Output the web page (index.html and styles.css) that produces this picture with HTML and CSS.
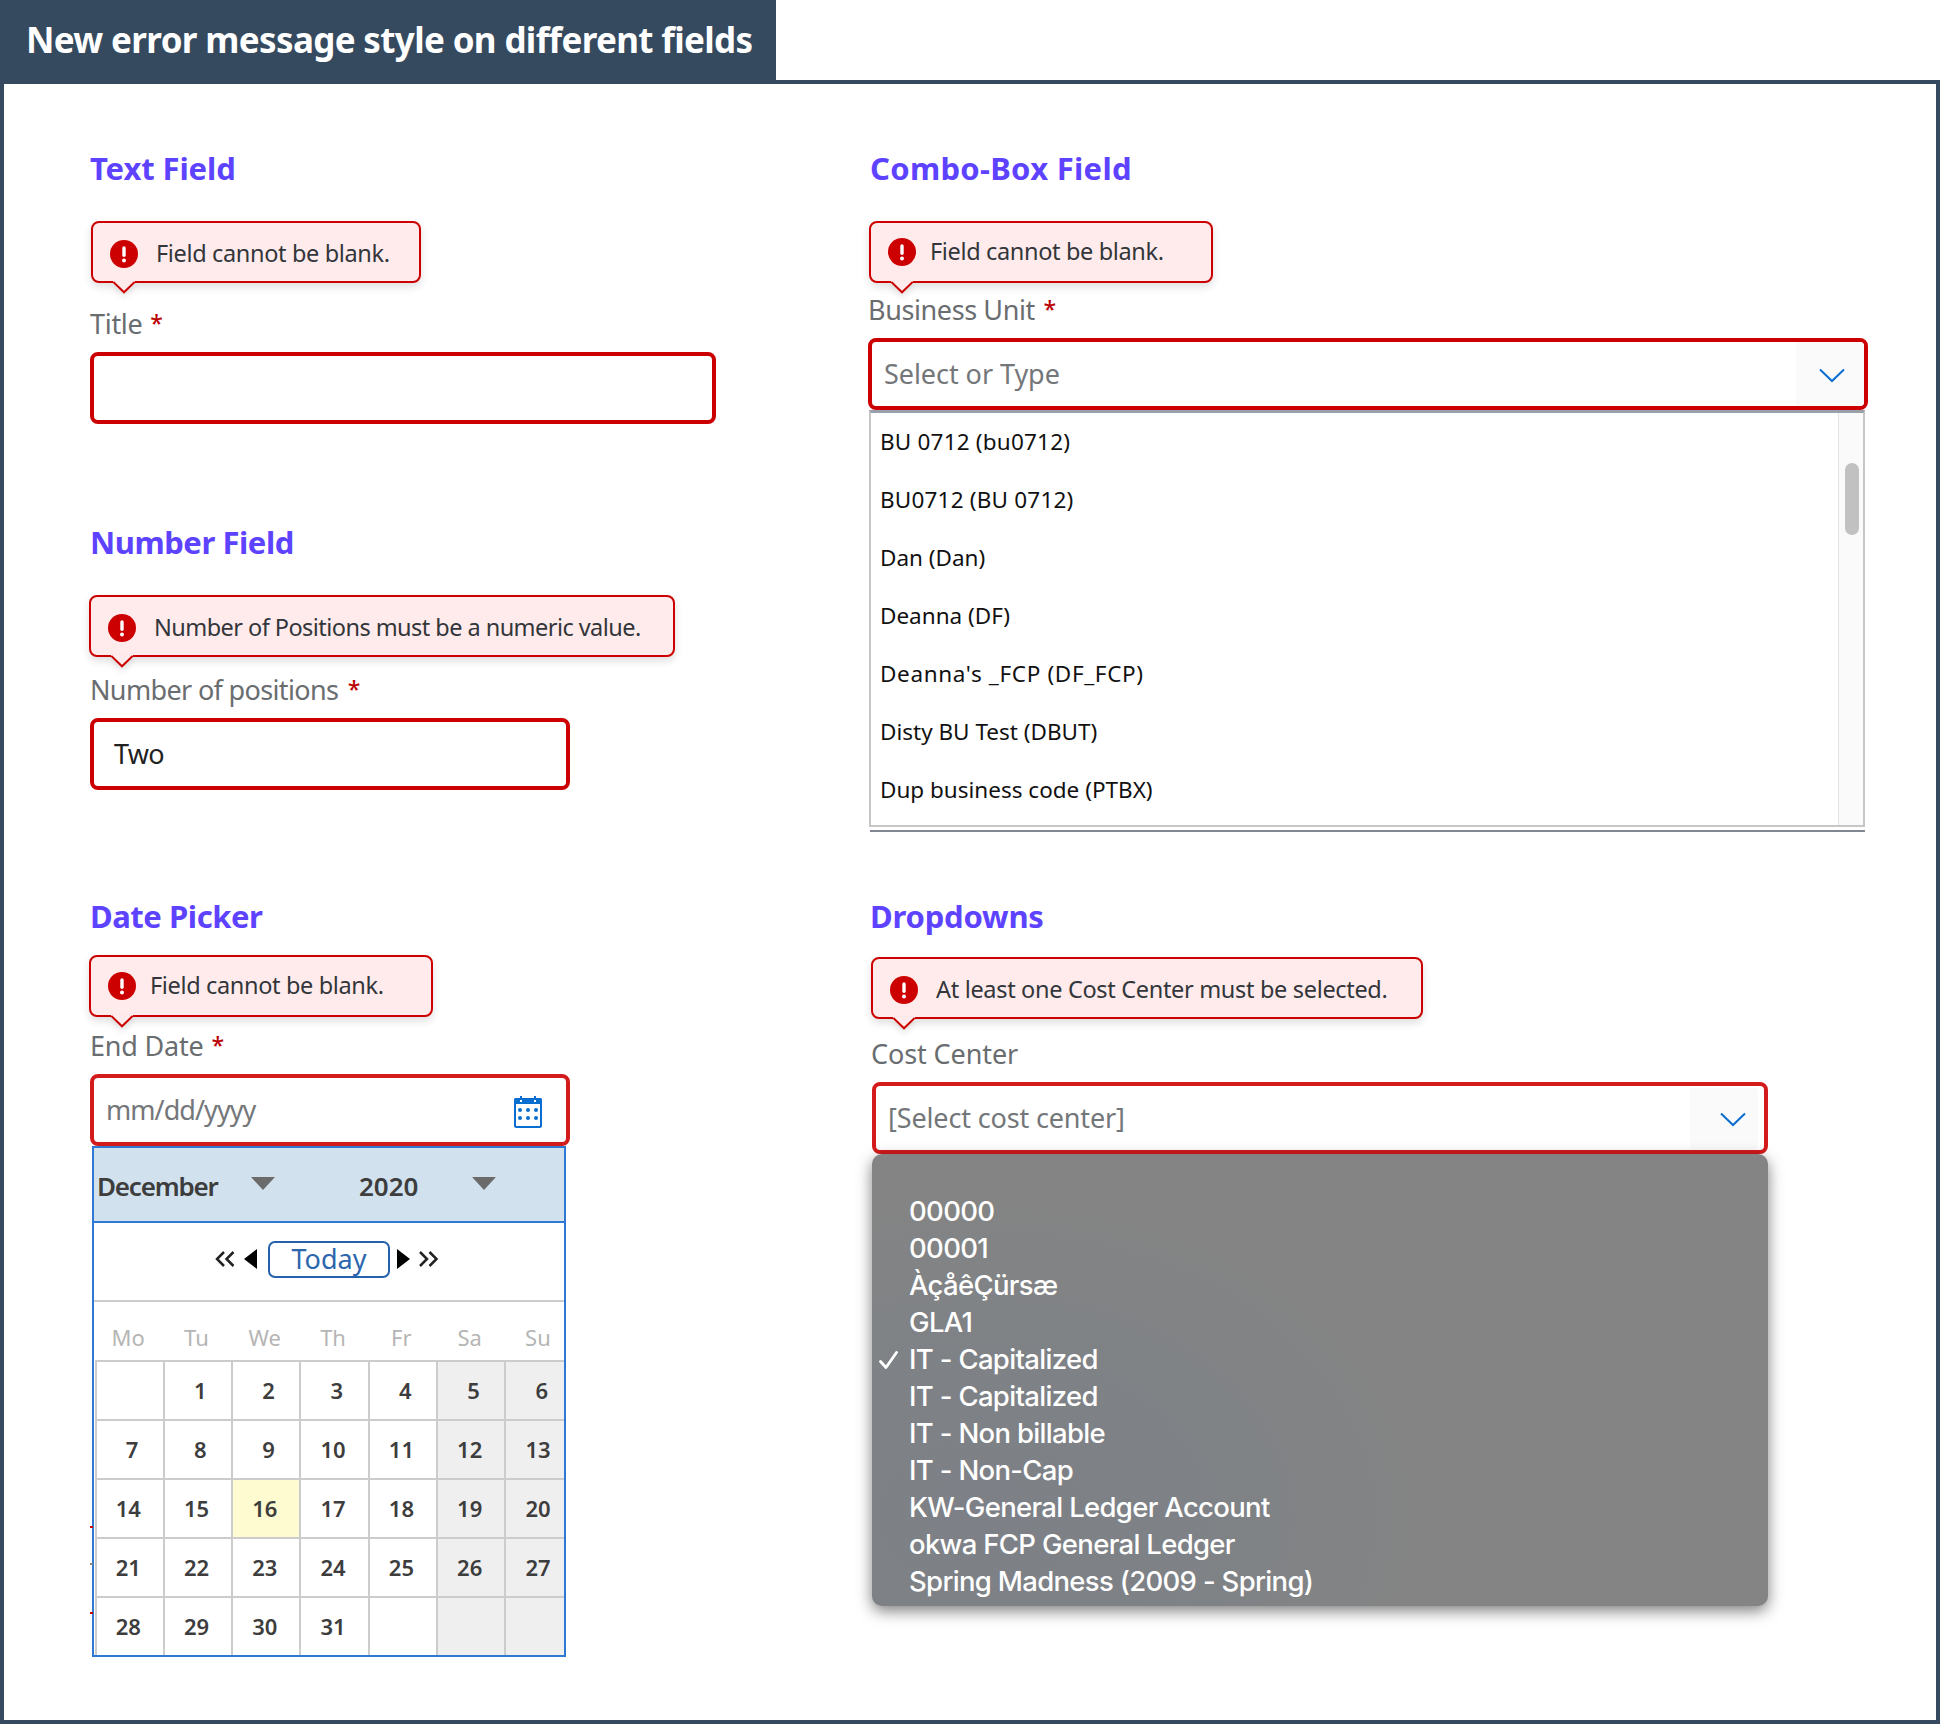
FILE: index.html
```
<!DOCTYPE html>
<html lang="en">
<head>
<meta charset="utf-8">
<title>New error message style on different fields</title>
<link rel="stylesheet" href="styles.css">
</head>
<body>
<svg width="0" height="0" class="defs">
  <symbol id="alert" viewBox="0 0 28 28"><circle cx="14" cy="14" r="14" fill="#c00"/><path d="M14 8v7.2" stroke="#fff" stroke-width="3.4" stroke-linecap="round"/><circle cx="14" cy="20.6" r="2" fill="#fff"/></symbol>
  <symbol id="tail" viewBox="0 0 22 13"><path d="M0 0h22v1.6L11 11.6 0 1.6z" fill="#ffebeb"/><path d="M0.3 1L11 11.3 21.7 1" fill="none" stroke="#c00" stroke-width="2"/></symbol>
  <symbol id="chevron" viewBox="0 0 26 16"><path d="M1 1.5L13 13 25 1.5" fill="none" stroke="#0a6ed1" stroke-width="2"/></symbol>
</svg>
<header class="title">New error message style on different fields</header>
<main class="board">
  <div class="column column-left">
    <section class="example">
      <h2 class="ls-text">Text Field</h2>
      <div class="tip tip-title"><svg class="tip-icon"><use href="#alert"/></svg><span>Field cannot be blank.</span><svg class="tail"><use href="#tail"/></svg></div>
      <label class="label">Title <b>*</b></label>
      <div class="field field-title"></div>
    </section>
    <section class="example">
      <h2 class="ls-number">Number Field</h2>
      <div class="tip tip-number"><svg class="tip-icon"><use href="#alert"/></svg><span>Number of Positions must be a numeric value.</span><svg class="tail"><use href="#tail"/></svg></div>
      <label class="label label-number">Number of positions <b>*</b></label>
      <div class="field field-number">Two</div>
    </section>
    <section class="example">
      <h2 class="ls-date">Date Picker</h2>
      <div class="tip tip-date"><svg class="tip-icon"><use href="#alert"/></svg><span>Field cannot be blank.</span><svg class="tail"><use href="#tail"/></svg></div>
      <label class="label label-date">End Date <b>*</b></label>
      <div class="field field-date"><span>mm/dd/yyyy</span>
        <svg class="cal-icon" viewBox="0 0 28 32"><rect x="1" y="3" width="26" height="28" rx="1.500" fill="#fff" stroke="#0a6ed1" stroke-width="2"/><path d="M0 3.500Q0 2 1.500 2H26.500Q28 2 28 3.500V8H0z" fill="#0a6ed1"/><path d="M7 0v4M21 0v4" stroke="#0a6ed1" stroke-width="2"/><path d="M7 4v2M21 4v2" stroke="#fff" stroke-width="2"/><g fill="#0a6ed1"><circle cx="6" cy="14" r="2"/><circle cx="14" cy="14" r="2"/><circle cx="22" cy="14" r="2"/><circle cx="6" cy="22" r="2"/><circle cx="14" cy="22" r="2"/><circle cx="22" cy="22" r="2"/></g></svg>
      </div>
      <div class="calendar">
        <div class="cal-head"><span class="month">December</span><i class="caret"></i><span class="year">2020</span><i class="caret"></i></div>
        <div class="cal-nav">
          <svg width="21" height="18" viewBox="0 0 21 18" class="dbl"><path d="M9 2L2 9l7 7M18.500 2l-7 7 7 7"/></svg>
          <svg width="13" height="20" viewBox="0 0 13 20" class="prev"><path d="M13 0v20L0 10z"/></svg>
          <span class="today">Today</span>
          <svg width="13" height="20" viewBox="0 0 13 20" class="next"><path d="M0 0v20l13-10z"/></svg>
          <svg width="21" height="18" viewBox="0 0 21 18" class="dbl"><path d="M2 2l7 7-7 7M11.500 2l7 7-7 7"/></svg>
        </div>
        <div class="weekdays"><span>Mo</span><span>Tu</span><span>We</span><span>Th</span><span>Fr</span><span>Sa</span><span>Su</span></div>
        <div class="days">
          <span></span><span class="one">1</span><span class="one">2</span><span class="one">3</span><span class="one">4</span><span class="off one">5</span><span class="off one">6</span>
          <span class="one">7</span><span class="one">8</span><span class="one">9</span><span>10</span><span>11</span><span class="off">12</span><span class="off">13</span>
          <span>14</span><span>15</span><span class="now">16</span><span>17</span><span>18</span><span class="off">19</span><span class="off">20</span>
          <span>21</span><span>22</span><span>23</span><span>24</span><span>25</span><span class="off">26</span><span class="off">27</span>
          <span>28</span><span>29</span><span>30</span><span>31</span><span></span><span class="off"></span><span class="off"></span>
        </div>
        <i class="tick tick-1"></i><i class="tick tick-2"></i><i class="tick tick-3"></i>
      </div>
    </section>
  </div>
  <div class="column column-right">
    <section class="example example-tall">
      <h2 class="ls-combo">Combo-Box Field</h2>
      <div class="tip tip-combo"><svg class="tip-icon"><use href="#alert"/></svg><span>Field cannot be blank.</span><svg class="tail"><use href="#tail"/></svg></div>
      <label class="label label-combo">Business Unit <b>*</b></label>
      <div class="field field-combo"><span>Select or Type</span><span class="opener"><svg class="chevron"><use href="#chevron"/></svg></span></div>
      <div class="listbox">
        <ul><li class="digits">BU 0712 (bu0712)</li><li class="digits">BU0712 (BU 0712)</li><li>Dan (Dan)</li><li>Deanna (DF)</li><li class="wide">Deanna's _FCP (DF_FCP)</li><li>Disty BU Test (DBUT)</li><li>Dup business code (PTBX)</li></ul>
        <div class="scrollbar"><div class="thumb"></div></div>
      </div>
      <div class="underline"></div>
    </section>
    <section class="example">
      <h2 class="ls-drop">Dropdowns</h2>
      <div class="tip tip-drop"><svg class="tip-icon"><use href="#alert"/></svg><span>At least one Cost Center must be selected.</span><svg class="tail"><use href="#tail"/></svg></div>
      <label class="label label-drop">Cost Center</label>
      <div class="field field-drop"><span>[Select cost center]</span><span class="opener"><svg class="chevron"><use href="#chevron"/></svg></span></div>
      <ul class="menu">
        <li>00000</li><li>00001</li><li>ÀçåêÇürsæ</li><li>GLA1</li>
        <li><svg class="check" viewBox="0 0 19 18"><path d="M1.500 10.500L7 16.500 17.500 1.500" fill="none" stroke="#fff" stroke-width="2.800" stroke-linecap="round" stroke-linejoin="round"/></svg>IT - Capitalized</li>
        <li>IT - Capitalized</li><li>IT - Non billable</li><li>IT - Non-Cap</li><li>KW-General Ledger Account</li><li>okwa FCP General Ledger</li><li>Spring Madness (2009 - Spring)</li>
      </ul>
    </section>
  </div>
</main>
</body>
</html>
```
FILE: styles.css
```
* { box-sizing: border-box; }
body { margin: 0; background: #fff; font-family: "Noto Sans", sans-serif; color: #32363a; }
.defs { position: absolute; }
svg { display: block; flex: none; }
ul { list-style: none; margin: 0; padding: 0; }

.title { width: 776px; height: 80px; padding-left: 26px; background: #354a5f; color: #fff; font-size: 35px; font-weight: 700; line-height: 79px; letter-spacing: -0.65px; white-space: nowrap; }
.board { display: flex; height: 1644px; border: 4px solid #354a5f; padding: 62px 0 0 86px; }
.column { width: 778px; }
.column-right { width: 1000px; }
.example { display: flex; flex-direction: column; align-items: flex-start; height: 374px; }
.example > * { flex: none; }
.example-tall { height: 748px; }

h2 { margin: 0; height: 44px; font-size: 31px; line-height: 44px; font-weight: 700; color: #5d43ff; white-space: nowrap; }
.column-right h2 { margin-left: 2px; }
.ls-text { letter-spacing: -0.1px; }
.ls-number, .ls-date { letter-spacing: -0.45px; }
.ls-combo { letter-spacing: 0.3px; }
.ls-drop { letter-spacing: -0.2px; }

.tip { position: relative; display: flex; align-items: center; height: 62px; padding: 4px 0 0 17px; border: 2px solid #c00; border-radius: 8px; background: #ffebeb; box-shadow: 0 4px 8px rgba(0,0,0,.13); font-size: 23.5px; letter-spacing: -0.35px; white-space: nowrap; }
.tip span { margin-top: -2px; }
.tip-icon { width: 28px; height: 28px; margin-right: 18px; }
.tail { position: absolute; left: 20px; top: 58px; width: 22px; height: 13px; filter: drop-shadow(0 4px 3px rgba(0,0,0,.1)); }
.tip-title { width: 330px; margin: 31px 0 23px 1px; }
.tip-number { width: 586px; margin: 31px 0 15px -1px; letter-spacing: -0.55px; }
.tip-date { width: 344px; margin: 17px 0 11px -1px; padding-top: 0; }
.tip-date .tip-icon, .tip-combo .tip-icon { margin-right: 14px; }
.tip-combo { width: 344px; margin: 31px 0 9px 1px; padding-top: 0; }
.tip-drop { width: 552px; margin: 19px 0 17px 3px; letter-spacing: -0.32px; }

.label { height: 36px; margin-bottom: 10px; font-size: 27px; line-height: 36px; letter-spacing: -0.3px; color: #6a6d70; white-space: nowrap; }
.label b { margin-left: 1px; font-size: 23px; line-height: 20px; font-weight: 500; vertical-align: 2px; color: #b00; }
.label-number { letter-spacing: -0.65px; }
.label-number b { margin-left: 3px; }
.label-date { letter-spacing: -0.2px; }
.label-date b { margin-left: 1px; }
.label-combo { letter-spacing: -0.4px; }
.label-combo b { margin-left: 2px; }
.label-drop { margin-left: 3px; letter-spacing: -0.1px; }
.field { display: flex; align-items: center; height: 72px; border: 4px solid #c00; border-radius: 8px; background: #fff; color: #74777a; font-size: 27px; letter-spacing: -0.15px; white-space: nowrap; }
.field > span:first-child { margin-top: -2px; }
.field-title { width: 626px; }
.field-number { width: 480px; padding-left: 20px; padding-bottom: 2px; color: #222; letter-spacing: -0.7px; }
.field-date { width: 480px; padding: 0 24px 0 12px; justify-content: space-between; border-color: #d41b1b; letter-spacing: -0.95px; }
.cal-icon { width: 28px; height: 32px; margin-top: 4px; }
.field-combo { position: relative; z-index: 1; width: 1000px; padding-left: 12px; justify-content: space-between; letter-spacing: -0.05px; }
.field-drop { width: 896px; margin-left: 4px; padding: 0 6px 0 12px; justify-content: space-between; border-color: #d41b1b; }
.opener { display: flex; align-items: center; width: 68px; height: 64px; padding-left: 23px; background: #fafafa; border-radius: 0 4px 4px 0; }
.field-drop .opener { height: 61px; padding-left: 30px; }
.chevron { width: 26px; height: 16px; margin-top: 3px; }

.calendar { position: relative; width: 474px; height: 511px; margin-left: 2px; border: 2px solid #2f78d4; background: #fff; }
.cal-head { display: flex; align-items: center; height: 75px; padding: 3px 0 0 3px; border-bottom: 2px solid #2f78d4; background: #d1e2ee; color: #3d3d3d; font-size: 26px; font-weight: 600; letter-spacing: -1.2px; }
.month { width: 155px; }
.year { width: 114px; letter-spacing: 0; }
.month + .caret { margin-right: 84px; }
.caret { width: 24px; height: 13px; margin: -5px -1px 0; background: #6b6b6b; clip-path: polygon(0 0, 100% 0, 50% 100%); }
.cal-nav { display: flex; align-items: center; height: 79px; padding: 0 0 5px 121px; border-bottom: 2px solid #ccc; }
.dbl path { fill: none; stroke: #222; stroke-width: 2.5; }
.prev { margin: 0 11px 0 8px; }
.next { margin: 0 8px 0 7px; }
.today { width: 122px; height: 37px; border: 2px solid #2560ac; border-radius: 7px; color: #2c66ae; font-size: 27px; line-height: 31px; text-align: center; }
.weekdays { display: grid; grid-template-columns: repeat(7, 68.3px); height: 58px; overflow: hidden; color: #b5b5b5; font-size: 22px; line-height: 71px; text-align: center; }
.days { display: grid; grid-template-columns: repeat(7, 68.3px); grid-auto-rows: 59px; height: 295px; padding-left: 0.5px; overflow: hidden; }
.days span { border-top: 2px solid #ccc; border-left: 2px solid #ccc; padding-right: 22px; color: #3d3d3d; font-size: 22px; font-weight: 600; line-height: 56px; text-align: right; }
.days .one { padding-right: 24.5px; }
.days .off { background: #efefef; }
.days .now { background: #fdfbcf; }
.tick { position: absolute; left: -4px; width: 3px; height: 2px; background: #c00; }
.tick-1 { top: 378px; }
.tick-2 { top: 415px; background: #888; }
.tick-3 { top: 464px; }

.listbox { display: flex; justify-content: space-between; width: 996px; height: 417px; margin: 0 0 3px 1px; border: 2px solid #c6c6c6; border-top: 3px solid #9aa0aa; font-size: 22.5px; color: #111; }
.listbox ul { padding: 0 0 0 9px; }
.listbox li { height: 58px; line-height: 58px; white-space: nowrap; }
.listbox .digits { letter-spacing: 0.2px; }
.listbox .wide { letter-spacing: 0.65px; }
.scrollbar { width: 25px; padding: 50px 0 0 6px; border-left: 1px solid #e5e5e5; background: #fafafa; }
.thumb { width: 14px; height: 72px; border-radius: 7px; background: #c1c1c1; }
.underline { width: 995px; height: 2px; margin-left: 2px; background: #7f8794; }

.menu { width: 896px; height: 452px; margin-left: 4px; padding: 39px 0 0 37px; border-radius: 10px; background: radial-gradient(ellipse 460px 330px at 12% 80%, #7d8187 0%, #7e8286 45%, rgba(132,132,132,0) 100%), #848484; box-shadow: 0 5px 15px rgba(0,0,0,.5); color: #fff; font: 500 27.5px/37px Inter, sans-serif; letter-spacing: -0.68px; }
.menu li { position: relative; height: 37px; white-space: nowrap; }
.check { position: absolute; left: -30px; top: 10px; width: 19px; height: 18px; }
```
